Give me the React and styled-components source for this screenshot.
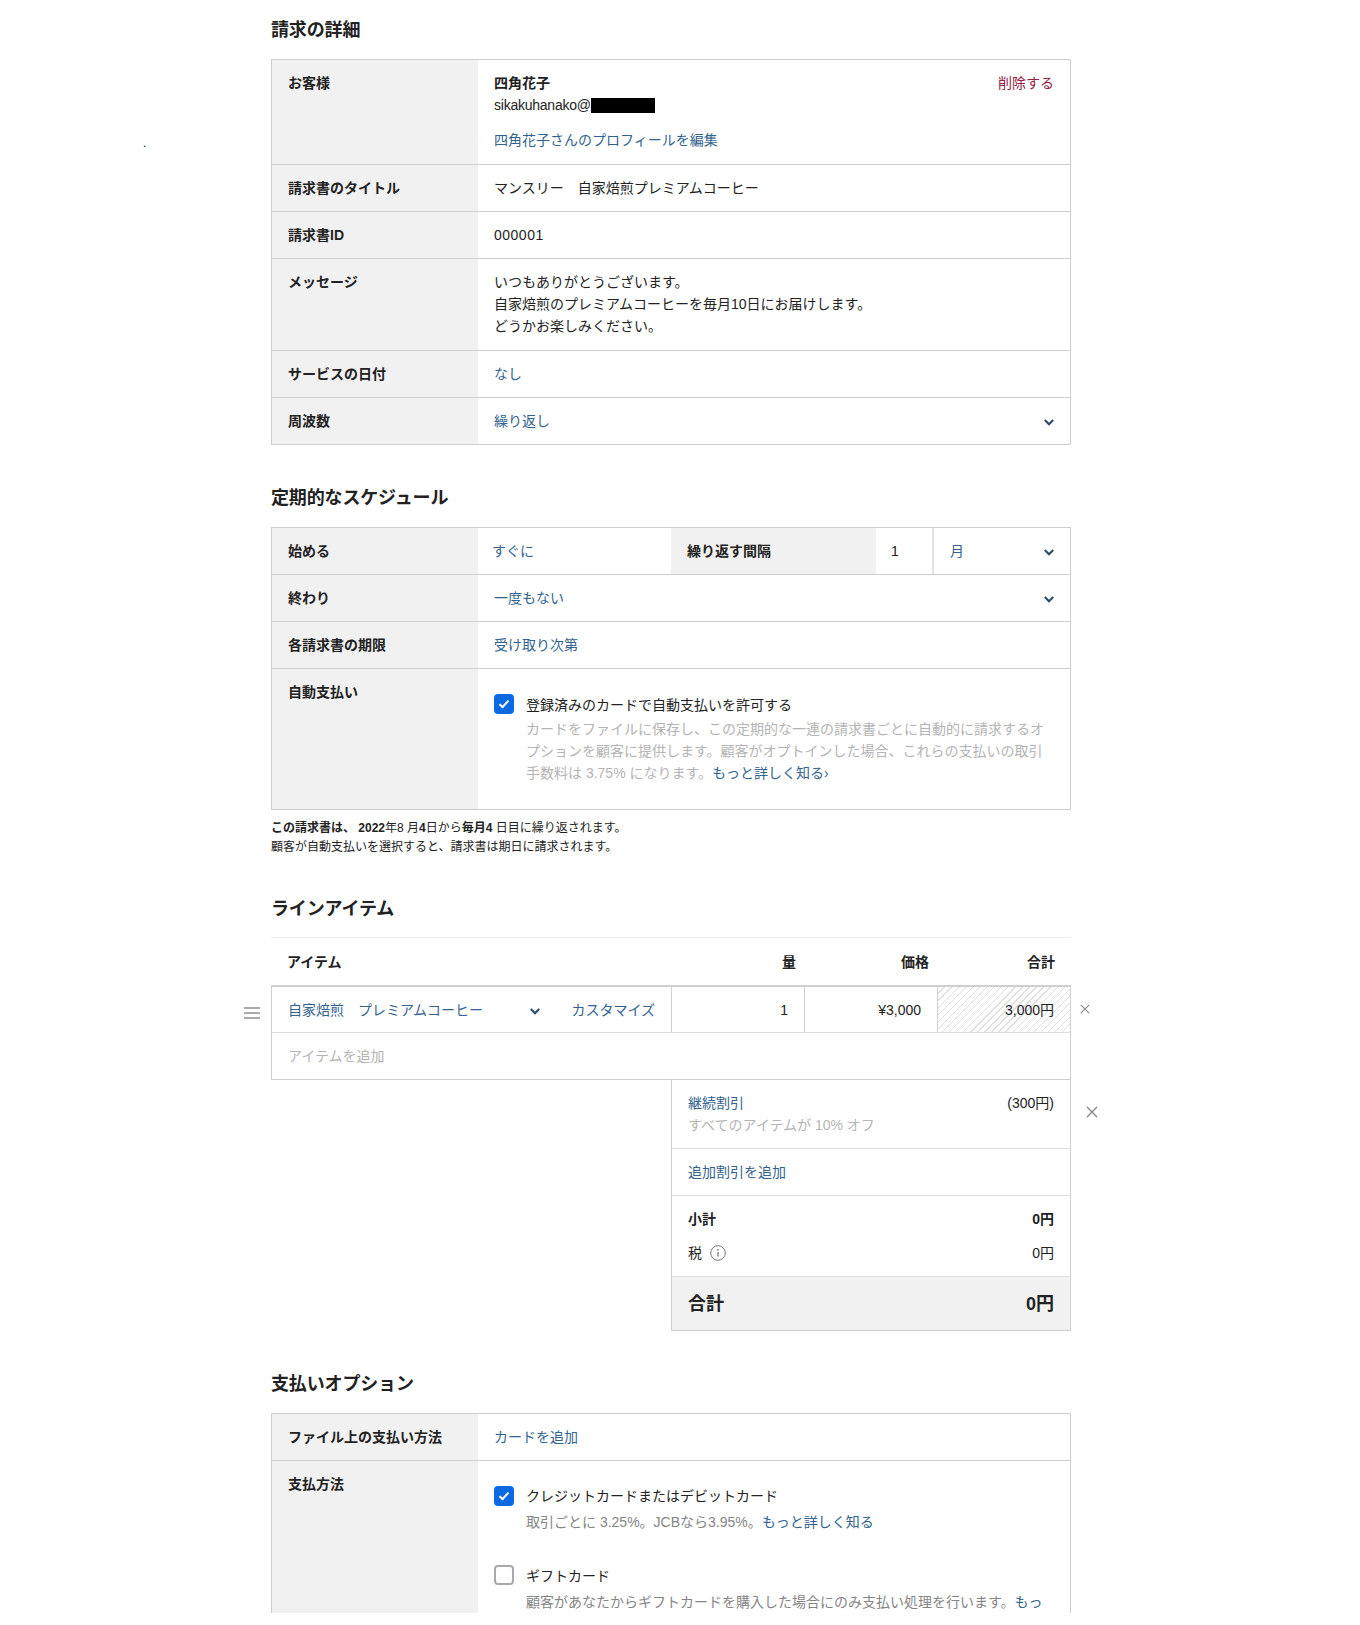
import React from 'react'
import styled, { createGlobalStyle } from 'styled-components'

const GlobalStyle = createGlobalStyle`
  html, body { margin: 0; padding: 0; background: #fff; }
  body {
    font-family: "Liberation Sans", "Noto Sans CJK JP", sans-serif;
    font-size: 14px;
    line-height: 22px;
    color: #222;
  }
`

const LINK = '#32638f'
const NAVY = '#2a4a6e'
const LINE = '#cfcfcf'

const Chevron = () => (
  <ChevronSvg viewBox="0 0 10 7">
    <path d="M0.8 1 L5 5.2 L9.2 1" fill="none" stroke={NAVY} strokeWidth="2.1" />
  </ChevronSvg>
)

const Check = () => (
  <svg width="12" height="10" viewBox="0 0 12 10">
    <path d="M1.5 5.2 L4.6 8 L10.5 1.6" fill="none" stroke="#fff" strokeWidth="2" />
  </svg>
)

const Close = ({ size }) => (
  <svg width={size} height={size} viewBox="0 0 12 12">
    <path d="M1 1 L11 11 M11 1 L1 11" fill="none" stroke="#888" strokeWidth="1.4" />
  </svg>
)

const InfoIcon = () => (
  <svg width="16" height="16" viewBox="0 0 16 16">
    <circle cx="8" cy="8" r="7.3" fill="none" stroke="#777" strokeWidth="1" />
    <circle cx="8" cy="4.8" r="0.9" fill="#777" />
    <path d="M8 7 V11.6" stroke="#777" strokeWidth="1.3" />
  </svg>
)

export default function App() {
  return (
    <Page>
      <GlobalStyle />
      <StrayDot>.</StrayDot>
      <Column>
        <Heading $top={18}>請求の詳細</Heading>
        <Card>
          <Row>
            <Label>お客様</Label>
            <Value $extra={1}>
              <SplitLine>
                <Strong>四角花子</Strong>
                <DangerLink>削除する</DangerLink>
              </SplitLine>
              <Email>sikakuhanako@<Redacted /></Email>
              <ProfileLink>四角花子さんのプロフィールを編集</ProfileLink>
            </Value>
          </Row>
          <Row>
            <Label>請求書のタイトル</Label>
            <Value>マンスリー　自家焙煎プレミアムコーヒー</Value>
          </Row>
          <Row>
            <Label>請求書ID</Label>
            <Value><Digits>000001</Digits></Value>
          </Row>
          <Row>
            <Label>メッセージ</Label>
            <Value $extra={1}>
              いつもありがとうございます。<br />
              自家焙煎のプレミアムコーヒーを毎月10日にお届けします。<br />
              どうかお楽しみください。
            </Value>
          </Row>
          <Row>
            <Label>サービスの日付</Label>
            <Value><Link>なし</Link></Value>
          </Row>
          <Row>
            <Label>周波数</Label>
            <SelectValue><Link>繰り返し</Link><Chevron /></SelectValue>
          </Row>
        </Card>

        <Heading $top={41}>定期的なスケジュール</Heading>
        <Card>
          <ScheduleRow>
            <Label>始める</Label>
            <Value $left={14}><Link>すぐに</Link></Value>
            <Label $left={16}>繰り返す間隔</Label>
            <IntervalInput>1</IntervalInput>
            <IntervalUnit><Link>月</Link><Chevron /></IntervalUnit>
          </ScheduleRow>
          <Row>
            <Label>終わり</Label>
            <SelectValue><Link>一度もない</Link><Chevron /></SelectValue>
          </Row>
          <Row>
            <Label>各請求書の期限</Label>
            <Value><Link>受け取り次第</Link></Value>
          </Row>
          <Row>
            <Label>自動支払い</Label>
            <OptionList $height={140}>
              <Option>
                <CheckBox $checked><Check /></CheckBox>
                <OptionText $top={0}>
                  <OptionTitle>登録済みのカードで自動支払いを許可する</OptionTitle>
                  <MutedText>
                    カードをファイルに保存し、この定期的な一連の請求書ごとに自動的に請求するオプションを顧客に提供します。顧客がオプトインした場合、これらの支払いの取引手数料は 3.75% になります。<Link>もっと詳しく知る›</Link>
                  </MutedText>
                </OptionText>
              </Option>
            </OptionList>
          </Row>
        </Card>
        <Note>
          <b>この請求書は、 2022</b>年8 月<b>4</b>日から<b>毎月4</b> 日目に繰り返されます。<br />
          顧客が自動支払いを選択すると、請求書は期日に請求されます。
        </Note>

        <Heading $top={40}>ラインアイテム</Heading>
        <ItemsHeader>
          <HeaderCell $align="left">アイテム</HeaderCell>
          <HeaderCell>量</HeaderCell>
          <HeaderCell>価格</HeaderCell>
          <HeaderCell>合計</HeaderCell>
        </ItemsHeader>
        <ItemsTable>
          <DragHandle />
          <RemoveButton $top={17} $right={-20}><Close size={10} /></RemoveButton>
          <ItemRow>
            <ItemCell>
              <ItemName><Link>自家焙煎　プレミアムコーヒー</Link><Chevron /></ItemName>
              <Link>カスタマイズ</Link>
            </ItemCell>
            <NumberCell>1</NumberCell>
            <NumberCell>¥3,000</NumberCell>
            <NumberCell $hatched>3,000円</NumberCell>
          </ItemRow>
          <AddItem>アイテムを追加</AddItem>
        </ItemsTable>
        <Summary>
          <RemoveButton $top={26} $right={-28}><Close size={12} /></RemoveButton>
          <DiscountRow>
            <SplitLine>
              <Link>継続割引</Link>
              <span>(300円)</span>
            </SplitLine>
            <MutedText>すべてのアイテムが 10% オフ</MutedText>
          </DiscountRow>
          <AddDiscountRow><Link>追加割引を追加</Link></AddDiscountRow>
          <SubtotalRows>
            <SplitLine><Strong>小計</Strong><Strong>0円</Strong></SplitLine>
            <TaxLine>
              <TaxLabel>税 <InfoIcon /></TaxLabel>
              <span>0円</span>
            </TaxLine>
          </SubtotalRows>
          <TotalRow><span>合計</span><span>0円</span></TotalRow>
        </Summary>

        <Heading $top={41}>支払いオプション</Heading>
        <Card>
          <Row>
            <Label>ファイル上の支払い方法</Label>
            <Value><Link>カードを追加</Link></Value>
          </Row>
          <Row>
            <Label>支払方法</Label>
            <OptionList $height={240}>
              <Option $gap={32}>
                <CheckBox $checked><Check /></CheckBox>
                <OptionText $top={-1}>
                  <OptionTitle>クレジットカードまたはデビットカード</OptionTitle>
                  <GreyText>取引ごとに 3.25%。JCBなら3.95%。<Link>もっと詳しく知る</Link></GreyText>
                </OptionText>
              </Option>
              <Option>
                <CheckBox />
                <OptionText $top={0}>
                  <OptionTitle>ギフトカード</OptionTitle>
                  <GreyText>顧客があなたからギフトカードを購入した場合にのみ支払い処理を行います。<Link>もっと詳しく知る</Link></GreyText>
                </OptionText>
              </Option>
            </OptionList>
          </Row>
        </Card>
      </Column>
    </Page>
  )
}

const Page = styled.div`
  position: relative;
  height: 1613px;
  overflow: hidden;
  background: #fff;
`

const StrayDot = styled.span`
  position: absolute;
  left: 143px;
  top: 132px;
  font-size: 12px;
`

const Column = styled.main`
  width: 800px;
  margin-left: 271px;
  display: flex;
  flex-direction: column;
`

const Heading = styled.h2`
  margin: ${p => p.$top}px 0 17px;
  font-size: 18px;
  line-height: 24px;
  font-weight: 700;
  letter-spacing: -0.15px;
  color: #222;
`

const Card = styled.section`
  border: 1px solid ${LINE};
  background: #fff;
`

const Row = styled.div`
  display: grid;
  grid-template-columns: 206px 1fr;
  & + & { border-top: 1px solid ${LINE}; }
`

const ScheduleRow = styled.div`
  display: grid;
  grid-template-columns: 206px 193px 205px 58px 1fr;
  border-bottom: 1px solid ${LINE};
`

const Label = styled.div`
  background: #f1f1f1;
  padding: 12px 16px;
  font-weight: 700;
  color: #222;
`

const Value = styled.div`
  min-width: 0;
  padding: 12px 16px ${p => 12 + (p.$extra || 0)}px ${p => p.$left ?? 16}px;
`

const SelectValue = styled(Value)`
  display: flex;
  align-items: center;
  justify-content: space-between;
`

const SplitLine = styled.div`
  display: flex;
  justify-content: space-between;
`

const Strong = styled.span`
  font-weight: 700;
`

const DangerLink = styled.span`
  color: #93213f;
`

const Link = styled.span`
  color: ${LINK};
`

const ProfileLink = styled(Link)`
  display: block;
  margin-top: 13px;
`

const Email = styled.div`
  letter-spacing: -0.24px;
`

const Digits = styled.span`
  letter-spacing: 0.5px;
`

const Redacted = styled.span`
  display: inline-block;
  width: 64px;
  height: 15px;
  background: #000;
  vertical-align: -3px;
`

const ChevronSvg = styled.svg`
  width: 10px;
  height: 7px;
  flex: none;
  margin-top: 3px;
`

const IntervalInput = styled.div`
  padding: 12px 0 12px 15px;
  border-right: 2px solid #e4e4e4;
`

const IntervalUnit = styled(SelectValue)`
  padding-left: 16px;
`

const OptionList = styled.div`
  height: ${p => p.$height}px;
  padding: 25px 24px 0 16px;
  box-sizing: border-box;
`

const Option = styled.div`
  display: flex;
  gap: 12px;
  margin-bottom: ${p => p.$gap || 0}px;
`

const CheckBox = styled.span`
  flex: none;
  width: 20px;
  height: 20px;
  box-sizing: border-box;
  display: flex;
  align-items: center;
  justify-content: center;
  border-radius: 4px;
  background: ${p => (p.$checked ? '#0b69e3' : '#fff')};
  border: ${p => (p.$checked ? 'none' : '2px solid #aaa')};
`

const OptionText = styled.div`
  min-width: 0;
  margin-top: ${p => p.$top}px;
`

const OptionTitle = styled.div`
  margin-bottom: 2px;
`

const MutedText = styled.div`
  color: #b4b4b4;
`

const GreyText = styled.div`
  color: #858585;
  margin-top: 4px;
`

const Note = styled.p`
  margin: 9px 0 0;
  font-size: 12px;
  line-height: 19px;
  color: #222;
`

const ItemsHeader = styled.div`
  display: grid;
  grid-template-columns: 400px 133px 133px 134px;
  margin-top: -1px;
  height: 48px;
  box-sizing: border-box;
  border-top: 1px solid #eee;
  align-items: center;
`

const HeaderCell = styled.div`
  text-align: ${p => p.$align || 'right'};
  padding: 0 ${p => (p.$align ? 0 : 8)}px 0 ${p => (p.$align ? 16 : 0)}px;
  font-weight: 700;
  &:last-child { padding-right: 16px; }
`

const ItemsTable = styled.div`
  position: relative;
  border: 1px solid ${LINE};
  border-top: 2px solid ${LINE};
`

const DragHandle = styled.span`
  position: absolute;
  left: -28px;
  top: 20px;
  width: 16px;
  height: 2px;
  background: #aaa;
  box-shadow: 0 5px 0 #aaa, 0 10px 0 #aaa;
`

const RemoveButton = styled.span`
  position: absolute;
  top: ${p => p.$top}px;
  right: ${p => p.$right}px;
  display: flex;
`

const ItemRow = styled.div`
  display: grid;
  grid-template-columns: 399px 133px 133px 1fr;
  height: 45px;
  border-bottom: 1px solid #ddd;
`

const ItemCell = styled.div`
  display: flex;
  align-items: center;
  justify-content: space-between;
  padding: 0 16px;
`

const ItemName = styled.div`
  width: 252px;
  display: flex;
  align-items: center;
  justify-content: space-between;
`

const NumberCell = styled.div`
  display: flex;
  align-items: center;
  justify-content: flex-end;
  padding-right: 16px;
  border-left: 1px solid ${LINE};
  background: ${p => (p.$hatched
    ? 'repeating-linear-gradient(-45deg, #dedede 0 1px, #fff 1px 5px)'
    : '#fff')};
`

const AddItem = styled.div`
  height: 46px;
  padding-left: 16px;
  display: flex;
  align-items: center;
  color: #b4b4b4;
`

const Summary = styled.div`
  position: relative;
  width: 400px;
  align-self: flex-end;
  box-sizing: border-box;
  border: 1px solid ${LINE};
  border-top: none;
`

const DiscountRow = styled.div`
  height: 69px;
  box-sizing: border-box;
  padding: 12px 16px 0;
  border-bottom: 1px solid #ddd;
`

const AddDiscountRow = styled.div`
  height: 47px;
  box-sizing: border-box;
  padding: 12px 16px;
  border-bottom: 1px solid #ddd;
`

const SubtotalRows = styled.div`
  height: 81px;
  box-sizing: border-box;
  padding: 12px 16px 0;
  border-bottom: 1px solid #ddd;
`

const TaxLine = styled(SplitLine)`
  margin-top: 12px;
`

const TaxLabel = styled.span`
  display: flex;
  align-items: center;
  gap: 8px;
`

const TotalRow = styled.div`
  height: 53px;
  box-sizing: border-box;
  padding: 0 16px;
  display: flex;
  align-items: center;
  justify-content: space-between;
  background: #f1f1f1;
  font-size: 18px;
  font-weight: 700;
`
